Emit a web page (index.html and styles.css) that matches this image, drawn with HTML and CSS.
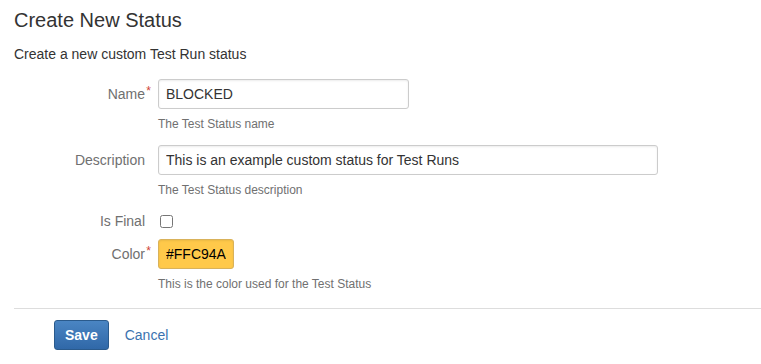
FILE: index.html
```html
<!DOCTYPE html>
<html lang="en">
<head>
    <meta charset="UTF-8">
    <title>Create New Status</title>
    <link rel="stylesheet" href="styles.css">
</head>
<body>
    <div class="page">
        <h1>Create New Status</h1>
        <p class="intro">Create a new custom Test Run status</p>
        <form class="status-form">
            <div class="field-group">
                <label for="name">Name<span class="req">*</span></label>
                <div class="field">
                    <input class="text" id="name" type="text" value="BLOCKED">
                    <div class="description">The Test Status name</div>
                </div>
            </div>
            <div class="field-group">
                <label for="desc">Description</label>
                <div class="field">
                    <input class="text long" id="desc" type="text" value="This is an example custom status for Test Runs">
                    <div class="description">The Test Status description</div>
                </div>
            </div>
            <div class="field-group check-group">
                <label for="final">Is Final</label>
                <div class="field">
                    <input class="checkbox" id="final" type="checkbox">
                </div>
            </div>
            <div class="field-group">
                <label for="color">Color<span class="req">*</span></label>
                <div class="field">
                    <input class="text color" id="color" type="text" value="#FFC94A">
                    <div class="description">This is the color used for the Test Status</div>
                </div>
            </div>
            <div class="buttons">
                <button class="button primary" type="button">Save</button>
                <a class="cancel" href="#">Cancel</a>
            </div>
        </form>
    </div>
</body>
</html>
```

FILE: styles.css
```css
body {
    margin: 0;
    padding: 0;
    background-color: #fff;
    color: #333;
    font-family: 'Liberation Sans', Arial, sans-serif;
    font-size: 14px;
}
.page {
    padding: 8px 0 0 14px;
}
h1 {
    margin: 0;
    font-size: 20px;
    font-weight: normal;
    line-height: 24px;
    color: #333;
}
.intro {
    margin: 12px 0 0;
    line-height: 20px;
}
.status-form {
    margin-top: 15px;
}
.field-group {
    display: grid;
    grid-template-columns: 131px 1fr;
    column-gap: 13px;
    margin-bottom: 13px;
}
.field-group label {
    position: relative;
    text-align: right;
    color: #707070;
    line-height: 20px;
    padding-top: 5px;
}
.req {
    position: absolute;
    right: -6px;
    top: 2px;
    color: #d04437;
    font-size: 12px;
}
.field {
    display: flex;
    flex-direction: column;
    align-items: flex-start;
}
.text {
    box-sizing: border-box;
    height: 30px;
    width: 251px;
    padding: 4px 7px;
    border: 1px solid #ccc;
    border-radius: 3px;
    box-shadow: inset 0 1px 2px rgba(0, 0, 0, 0.08);
    font-family: inherit;
    font-size: 14px;
    color: #333;
    background-color: #fff;
}
.text.long {
    width: 500px;
}
.text.color {
    width: 76px;
    background-color: #ffc94a;
    color: #000;
    border-color: #d9b25a;
}
.description {
    margin-top: 7px;
    font-size: 12px;
    line-height: 16px;
    color: #707070;
}
.check-group {
    margin-bottom: 8px;
}
.check-group label {
    padding-top: 0;
}
.checkbox {
    margin: 4px 0 0 2px;
    width: 13px;
    height: 13px;
}
.buttons {
    display: flex;
    align-items: center;
    gap: 16px;
    margin-top: 16px;
    padding: 11px 0 0 40px;
    border-top: 1px solid #ddd;
}
.button {
    height: 30px;
    padding: 0 10px;
    border: 1px solid #2a5a8c;
    border-radius: 3px;
    background: linear-gradient(#4a85c3, #3068a8);
    color: #fff;
    font-family: inherit;
    font-size: 14px;
    font-weight: bold;
}
.cancel {
    color: #3b73af;
    text-decoration: none;
}
```
